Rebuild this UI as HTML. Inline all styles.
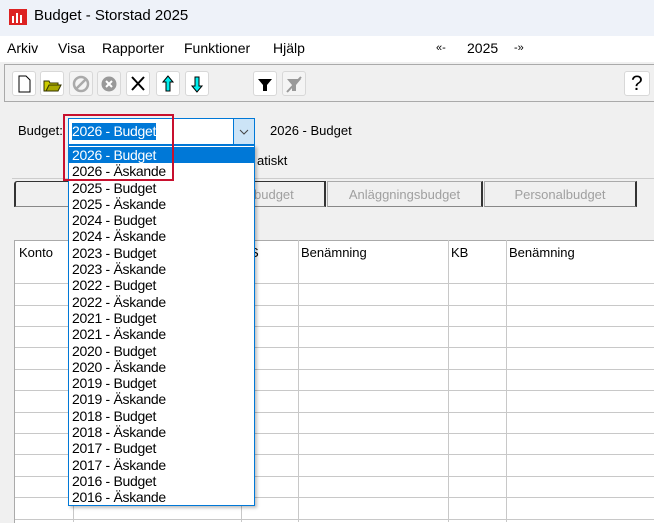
<!DOCTYPE html><html><head><meta charset="utf-8"><style>
body{margin:0;width:654px;height:522px;overflow:hidden;background:#f0f0f0;font-family:"Liberation Sans",sans-serif;font-size:13px;color:#000;position:relative}
.a{position:absolute}
.btn{position:absolute;top:71px;width:24px;height:25px;background:#fff;border:1px solid #d8d8d8;border-radius:3px;box-sizing:border-box}
.btn.dis{background:#f4f4f4}
.li{height:16.3px;line-height:16px;padding-left:3px;font-size:14px;letter-spacing:-0.3px}
.vl{position:absolute;top:240px;bottom:0;width:1px;background:#c8c8c8}
.tab{position:absolute;top:181px;height:26px;border:1px solid #aaa;border-right:2px solid #333;border-bottom:1px solid #888;color:#a0a0a0;text-align:center;line-height:26px;box-sizing:border-box;background:#f0f0f0}
</style></head><body>
<div class="a" style="left:0;top:0;width:654px;height:36px;background:#eef2f9"></div>
<div class="a" style="left:9px;top:9px;width:18px;height:16px;background:#d22"><div class="a" style="left:3px;top:7px;width:2px;height:7px;background:#fff"></div><div class="a" style="left:7px;top:4px;width:2px;height:10px;background:#fff"></div><div class="a" style="left:11px;top:6px;width:2px;height:8px;background:#fff"></div></div>
<div class="a" style="left:34px;top:7px;font-size:15px">Budget - Storstad 2025</div>
<div class="a" style="left:0;top:36px;width:654px;height:26px;background:#fff"></div>
<div class="a" style="left:7px;top:40px;font-size:14px;word-spacing:0">Arkiv</div>
<div class="a" style="left:58px;top:40px;font-size:14px">Visa</div>
<div class="a" style="left:102px;top:40px;font-size:14px">Rapporter</div>
<div class="a" style="left:184px;top:40px;font-size:14px">Funktioner</div>
<div class="a" style="left:273px;top:40px;font-size:14px">Hjälp</div>
<div class="a" style="left:436px;top:42px;font-size:11px">«-</div>
<div class="a" style="left:467px;top:40px;font-size:14px">2025</div>
<div class="a" style="left:514px;top:42px;font-size:11px">-»</div>
<div class="a" style="left:4px;top:64px;width:650px;height:1px;background:#aaa"></div>
<div class="a" style="left:4px;top:101px;width:650px;height:1px;background:#aaa"></div>
<div class="a" style="left:4px;top:64px;width:1px;height:38px;background:#aaa"></div>
<div class="btn" style="left:12px"><svg width="22" height="23"><path d="M6 4h7l4 4v12H6z" fill="#fff" stroke="#000"/></svg></div>
<div class="btn" style="left:40px"><svg width="22" height="23"><path d="M3 9h5l1 2h8v8H3z" fill="#cc0" stroke="#330"/><path d="M5 19l3-6h12l-3 6z" fill="#aa0" stroke="#330"/></svg></div>
<div class="btn dis" style="left:69px"><svg width="22" height="23"><circle cx="11" cy="12" r="7" fill="none" stroke="#aaa" stroke-width="2.5"/><path d="M6 17l10-10" stroke="#aaa" stroke-width="2.5"/></svg></div>
<div class="btn dis" style="left:97px"><svg width="22" height="23"><circle cx="11" cy="12" r="7.5" fill="#999"/><path d="M8 9l6 6M14 9l-6 6" stroke="#fff" stroke-width="2"/></svg></div>
<div class="btn" style="left:126px"><svg width="22" height="23"><path d="M5 5l12 13M17 5L5 18" stroke="#000" stroke-width="2"/></svg></div>
<div class="btn" style="left:156px"><svg width="22" height="23"><path d="M11 4l-5 6h3v9h4v-9h3z" fill="#0ee" stroke="#000"/></svg></div>
<div class="btn" style="left:185px"><svg width="22" height="23"><path d="M11 20l-5-6h3V5h4v9h3z" fill="#0ee" stroke="#000"/></svg></div>
<div class="btn" style="left:253px"><svg width="22" height="23"><path d="M4 7h14l-5 6v6h-4v-6z" fill="#000"/></svg></div>
<div class="btn dis" style="left:282px"><svg width="22" height="23"><path d="M4 7h14l-5 6v6h-4v-6z" fill="#999"/><path d="M4 20L18 5" stroke="#999" stroke-width="2"/></svg></div>
<div class="btn" style="left:624px;width:26px"><div class="a" style="left:6px;top:0;font-size:21px">?</div></div>
<div class="a" style="left:18px;top:123px;font-size:13px">Budget:</div>
<div class="a" style="left:270px;top:123px;font-size:13px">2026 - Budget</div>
<div class="a" style="left:257px;top:153px;font-size:13px">atiskt</div>
<div class="a" style="left:12px;top:178px;width:642px;height:1px;background:#ccc"></div>
<div class="tab" style="left:14px;width:312px;color:#a0a0a0;border-left:2px solid #333;border-top:1px solid #333;border-radius:3px 0 0 0"><span style="position:absolute;left:238px">budget</span></div>
<div class="tab" style="left:327px;width:156px">Anläggningsbudget</div>
<div class="tab" style="left:484px;width:153px">Personalbudget</div>
<div class="a" style="left:14px;top:240px;width:640px;height:282px;background:#fff;border-top:1px solid #aaa;border-left:1px solid #aaa"></div>
<div class="vl" style="left:73px"></div><div class="vl" style="left:241px"></div><div class="vl" style="left:298px"></div><div class="vl" style="left:448px"></div><div class="vl" style="left:506px"></div>
<div class="a" style="left:15px;top:283px;width:639px;height:1px;background:#c8c8c8"></div>
<div class="a" style="left:15px;top:305px;width:639px;height:1px;background:#c8c8c8"></div>
<div class="a" style="left:15px;top:326px;width:639px;height:1px;background:#c8c8c8"></div>
<div class="a" style="left:15px;top:347px;width:639px;height:1px;background:#c8c8c8"></div>
<div class="a" style="left:15px;top:369px;width:639px;height:1px;background:#c8c8c8"></div>
<div class="a" style="left:15px;top:390px;width:639px;height:1px;background:#c8c8c8"></div>
<div class="a" style="left:15px;top:412px;width:639px;height:1px;background:#c8c8c8"></div>
<div class="a" style="left:15px;top:433px;width:639px;height:1px;background:#c8c8c8"></div>
<div class="a" style="left:15px;top:454px;width:639px;height:1px;background:#c8c8c8"></div>
<div class="a" style="left:15px;top:476px;width:639px;height:1px;background:#c8c8c8"></div>
<div class="a" style="left:15px;top:497px;width:639px;height:1px;background:#c8c8c8"></div>
<div class="a" style="left:15px;top:519px;width:639px;height:1px;background:#c8c8c8"></div>
<div class="a" style="left:19px;top:245px">Konto</div>
<div class="a" style="left:250px;top:245px">S</div>
<div class="a" style="left:301px;top:245px">Benämning</div>
<div class="a" style="left:451px;top:245px">KB</div>
<div class="a" style="left:509px;top:245px">Benämning</div>
<div class="a" style="left:68px;top:118px;width:187px;height:27px;background:#fff;border:1px solid #0078d7;box-sizing:border-box">
<div class="a" style="left:3px;top:4px;height:17px;background:#0078d7;color:#fff;font-size:14px;line-height:17px;letter-spacing:-0.3px">2026 - Budget</div>
<div class="a" style="right:0;top:0;width:20px;height:25px;background:#cce4f7;border-left:1px solid #0078d7"><svg width="20" height="25"><path d="M6 11l4 4 4-4" fill="none" stroke="#444"/></svg></div></div>
<div class="a" style="left:68px;top:145px;width:187px;height:361px;background:#fff;border:1px solid #0078d7;box-sizing:border-box;box-shadow:2px 2px 3px rgba(0,0,0,.25);padding-top:1px">
<div class="li" style="background:#0078d7;color:#fff">2026 - Budget</div>
<div class="li">2026 - Äskande</div><div class="li">2025 - Budget</div><div class="li">2025 - Äskande</div><div class="li">2024 - Budget</div><div class="li">2024 - Äskande</div><div class="li">2023 - Budget</div><div class="li">2023 - Äskande</div><div class="li">2022 - Budget</div><div class="li">2022 - Äskande</div><div class="li">2021 - Budget</div><div class="li">2021 - Äskande</div><div class="li">2020 - Budget</div><div class="li">2020 - Äskande</div><div class="li">2019 - Budget</div><div class="li">2019 - Äskande</div><div class="li">2018 - Budget</div><div class="li">2018 - Äskande</div><div class="li">2017 - Budget</div><div class="li">2017 - Äskande</div><div class="li">2016 - Budget</div><div class="li">2016 - Äskande</div>
</div>
<div class="a" style="left:63px;top:114px;width:111px;height:67px;border:2px solid #c8102e;box-sizing:border-box"></div>
</body></html>
